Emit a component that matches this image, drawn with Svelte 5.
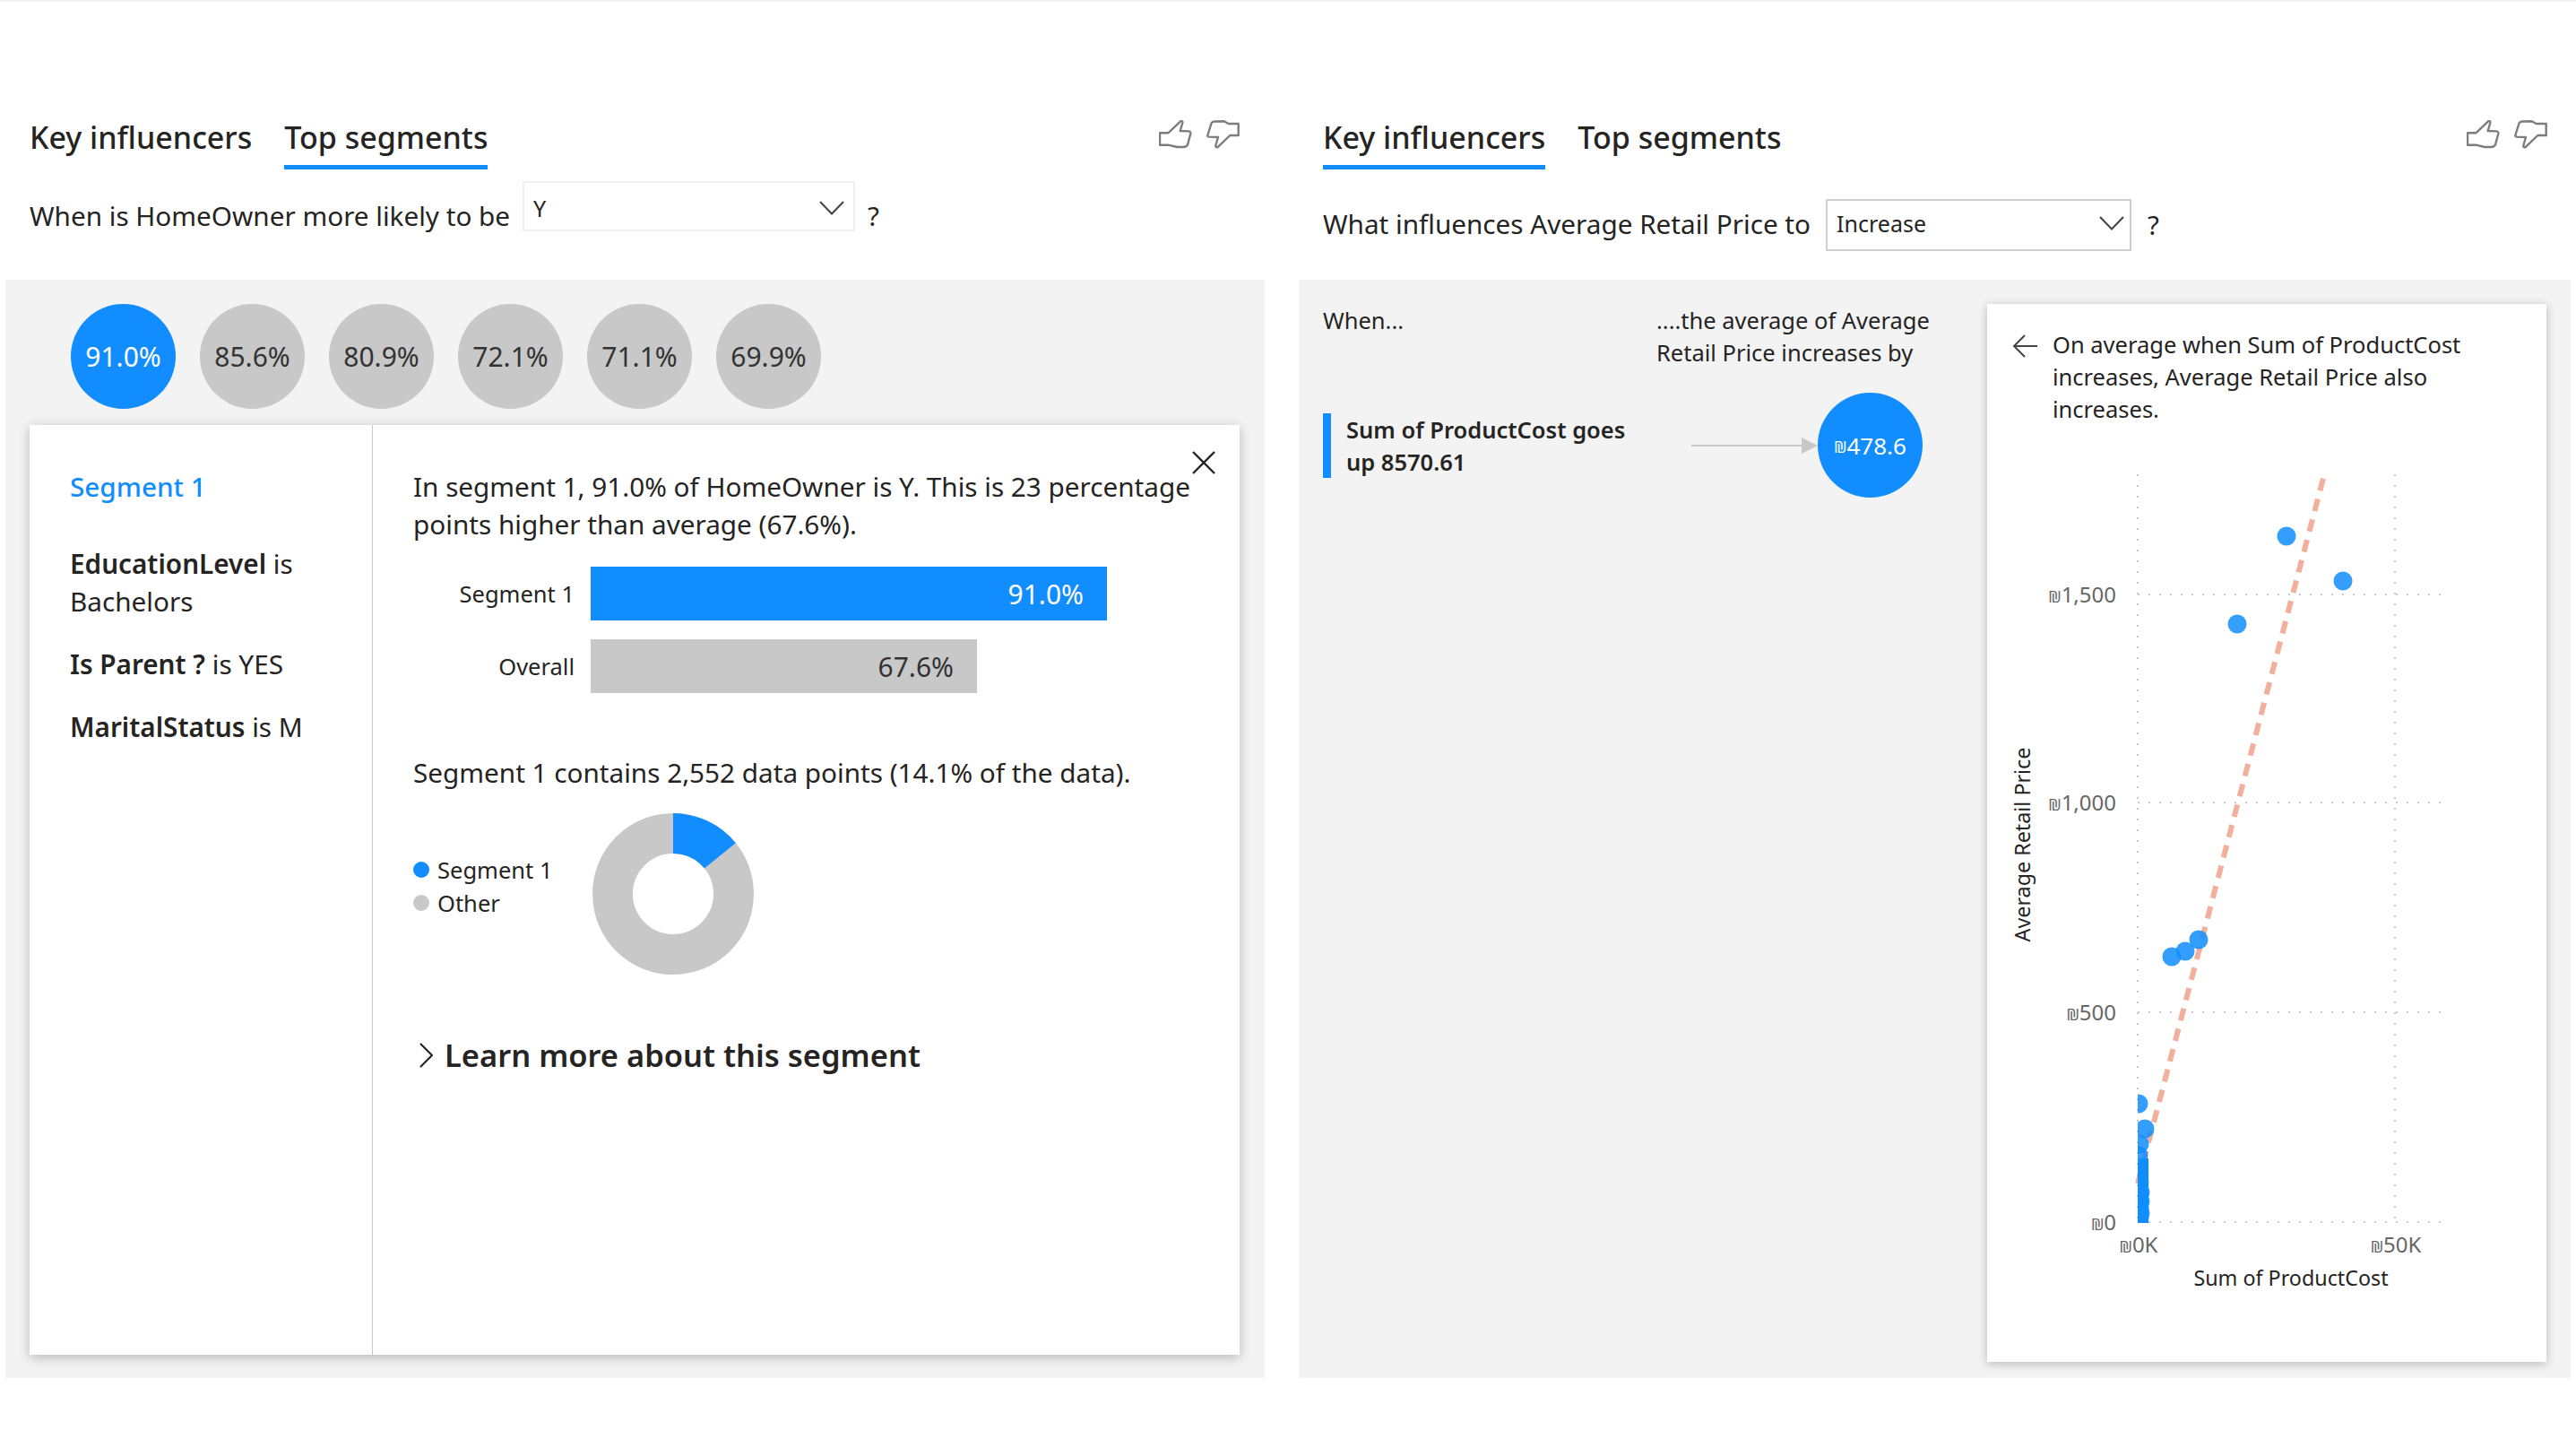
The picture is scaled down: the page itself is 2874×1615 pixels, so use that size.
<script>
  const circles = ["91.0%", "85.6%", "80.9%", "72.1%", "71.1%", "69.9%"];
  const conditions = [
    { name: "EducationLevel", text: " is Bachelors" },
    { name: "Is Parent ?", text: " is YES" },
    { name: "MaritalStatus", text: " is M" },
  ];
  const bars = [
    { label: "Segment 1", value: "91.0%", width: 576, color: "blue" },
    { label: "Overall", value: "67.6%", width: 431, color: "grey" },
  ];
  const yTicks = [
    { label: "1,500", y: 663 },
    { label: "1,000", y: 895 },
    { label: "500", y: 1129 },
    { label: "0", y: 1363 },
  ];
  const points = [
    [2551, 598], [2614, 648], [2496, 696], [2423, 1067], [2438, 1061], [2453, 1048],
    [2386, 1231], [2393, 1259], [2387, 1276], [2386, 1289], [2386, 1305], [2387, 1318], [2388, 1330],
    [2388, 1340], [2387, 1347], [2388, 1353], [2387, 1358],
  ];
</script>

{#snippet thumbs()}
  <div class="thumbs">
    <svg width="37" height="32" viewBox="0 0 37 32">
      <path d="M1 14.3H10.3L24.3 1.2Q26.8 0.8 26.3 3L23.7 12L33 12.4Q35.8 12.7 35.3 15L32 27.5Q31 29.8 27 30L20.3 30L10.3 27.7H1Z" />
    </svg>
    <svg width="37" height="32" viewBox="0 0 37 32">
      <path d="M1.3 17L5.5 3.5Q6.3 1.6 9 1.5L19.7 1.3L24.7 4H35.7V17H26.3L12.3 30.3Q10 30.5 10.3 28.5L13 19L3 18.6Q1 18.4 1.3 17Z" />
    </svg>
  </div>
{/snippet}

{#snippet chevron()}
  <svg class="chevron" width="28" height="16" viewBox="0 0 28 16">
    <path d="M1 1L14 14.5L27 1" />
  </svg>
{/snippet}

<div class="page">
  <section class="panel left">
    <div class="tabs">
      <div class="tab">Key influencers</div>
      <div class="tab active">Top segments</div>
      {@render thumbs()}
    </div>
    <div class="question first">
      <span>When is HomeOwner more likely to be</span>
      <div class="select light"><span>Y</span>{@render chevron()}</div>
      <span>?</span>
    </div>
    <div class="body segments">
      <div class="circles">
        {#each circles as c, i}
          <div class="circle" class:on={i === 0}>{c}</div>
        {/each}
      </div>
      <div class="card">
        <aside class="side">
          <div class="side-title">Segment 1</div>
          {#each conditions as c}
            <p class="condition"><b>{c.name}</b>{c.text}</p>
          {/each}
        </aside>
        <div class="detail">
          <svg class="close" width="26" height="26" viewBox="0 0 26 26">
            <path d="M1 1L25 25M25 1L1 25" />
          </svg>
          <p class="lead">In segment 1, 91.0% of HomeOwner is Y. This is 23 percentage points higher than average (67.6%).</p>
          <div class="bars">
            {#each bars as b}
              <div class="bar-row">
                <span class="bar-label">{b.label}</span>
                <div class="bar {b.color}" style="width: {b.width}px">{b.value}</div>
              </div>
            {/each}
          </div>
          <p class="contains">Segment 1 contains 2,552 data points (14.1% of the data).</p>
          <div class="share">
            <div class="legend">
              <div class="legend-item"><i class="dot blue"></i>Segment 1</div>
              <div class="legend-item"><i class="dot grey"></i>Other</div>
            </div>
            <svg width="180" height="180" viewBox="0 0 180 180">
              <circle cx="90" cy="90" r="67.5" fill="none" stroke="#c8c8c8" stroke-width="45" />
              <circle cx="90" cy="90" r="67.5" fill="none" stroke="#118dff" stroke-width="45"
                stroke-dasharray="59.8 424.1" transform="rotate(-90 90 90)" />
            </svg>
          </div>
          <div class="learn">
            <svg width="16" height="28" viewBox="0 0 16 28"><path d="M2 1L15 14L2 27" /></svg>
            <span>Learn more about this segment</span>
          </div>
        </div>
      </div>
    </div>
  </section>

  <section class="panel right">
    <div class="tabs">
      <div class="tab active">Key influencers</div>
      <div class="tab">Top segments</div>
      {@render thumbs()}
    </div>
    <div class="question second">
      <span class="question-text">What influences Average Retail Price to</span>
      <div class="select"><span>Increase</span>{@render chevron()}</div>
      <span class="question-mark">?</span>
    </div>
    <div class="body influencers">
      <div class="list">
        <div class="list-head">
          <span>When...</span>
          <span class="list-head-right">....the average of Average Retail Price increases by</span>
        </div>
        <div class="influencer">
          <div class="influencer-name">Sum of ProductCost goes up 8570.61</div>
          <div class="arrow"><i class="arrow-line"></i><i class="arrow-head"></i></div>
          <div class="circle on value"><small>₪</small>478.6</div>
        </div>
      </div>
      <div class="chart-card">
        <div class="chart-head">
          <svg width="28" height="26" viewBox="0 0 28 26"><path d="M14 1L2 13L14 25M2 13H28" /></svg>
          <p>On average when Sum of ProductCost increases, Average Retail Price also increases.</p>
        </div>
        <svg class="chart" width="624" height="1043" viewBox="2217 476 624 1043">
          {#each yTicks as t}
            <line class="grid" x1="2385" x2="2724" y1={t.y} y2={t.y} />
            <text class="tick" x="2361" y={t.y + 9} text-anchor="end"><tspan class="shekel">₪</tspan>{t.label}</text>
          {/each}
          <line class="grid" x1="2385" x2="2385" y1="529" y2="1363" />
          <line class="grid" x1="2672" x2="2672" y1="529" y2="1363" />
          <text class="tick" x="2386" y="1397" text-anchor="middle"><tspan class="shekel">₪</tspan>0K</text>
          <text class="tick" x="2673" y="1397" text-anchor="middle"><tspan class="shekel">₪</tspan>50K</text>
          <text class="axis" x="2556" y="1434" text-anchor="middle">Sum of ProductCost</text>
          <text class="axis" transform="translate(2265 942) rotate(-90)" text-anchor="middle">Average Retail Price</text>
          <line class="trend" x1="2385" y1="1320" x2="2594" y2="526" />
          <clipPath id="plot"><rect x="2385" y="500" width="360" height="864" /></clipPath>
          <g clip-path="url(#plot)">
            <rect x="2385" y="1292" width="12" height="72" fill="#118dff" />
            {#each points as p}
              <circle cx={p[0]} cy={p[1]} r="10.5" fill="#118dff" fill-opacity="0.85" />
            {/each}
          </g>
        </svg>
      </div>
    </div>
  </section>
</div>

<style>
  :global(body) {
    margin: 0;
    background: #fff;
  }

  .page {
    display: flex;
    gap: 38px;
    width: 2874px;
    height: 1615px;
    box-sizing: border-box;
    padding: 0 6px;
    border-top: 2px solid #f3f3f3;
    font-family: "Noto Sans", "DejaVu Sans", sans-serif;
    font-size: 29.7px;
    color: #252423;
  }

  .panel {
    display: flex;
    flex-direction: column;
    min-width: 0;
  }

  .panel.left {
    width: 1405px;
  }

  .panel.right {
    width: 1419px;
  }

  .tabs {
    display: flex;
    gap: 36px;
    padding: 127px 26px 0 27px;
  }

  .left .tabs {
    padding-right: 28px;
  }

  .tab {
    font-size: 34px;
    line-height: 48px;
    font-weight: 500;
    padding-bottom: 7px;
    border-bottom: 5px solid transparent;
  }

  .tab.active {
    border-bottom-color: #118dff;
  }

  .thumbs {
    display: flex;
    gap: 16px;
    margin: 5px 0 0 auto;
  }

  .thumbs path {
    fill: none;
    stroke: #7c7c7c;
    stroke-width: 2.4;
    stroke-linejoin: round;
  }

  .question {
    display: flex;
    gap: 14px;
    height: 123px;
    padding-left: 27px;
  }

  .question.first {
    align-items: flex-start;
  }

  .question.first > span {
    margin-top: 31px;
  }

  .question.second {
    align-items: center;
    gap: 17px;
  }

  .question-text {
    margin-bottom: 2px;
  }

  .question-mark {
    margin-left: 1px;
  }

  .select {
    display: flex;
    align-items: center;
    justify-content: space-between;
    box-sizing: border-box;
    width: 341px;
    height: 58px;
    padding: 0 6px 4px 10px;
    border: 2px solid #cfcfcf;
    font-size: 25px;
  }

  .select.light {
    width: 371px;
    height: 56px;
    margin-top: 13px;
    border-color: #efefef;
    padding: 3px 10px 0 10px;
  }

  .chevron path {
    fill: none;
    stroke: #444;
    stroke-width: 2;
  }

  .body {
    flex: none;
    height: 1225px;
    box-sizing: border-box;
    background: #f3f3f3;
  }

  .segments {
    display: flex;
    flex-direction: column;
    padding: 27px 28px 26px 27px;
  }

  .circles {
    display: flex;
    gap: 27px;
    padding-left: 46px;
    margin-bottom: 18px;
  }

  .circle {
    display: flex;
    align-items: center;
    justify-content: center;
    flex: none;
    width: 117px;
    height: 117px;
    border-radius: 50%;
    background: #c8c8c8;
    font-size: 30px;
    color: #333;
  }

  .circle.on {
    background: #118dff;
    color: #fff;
  }

  .card {
    display: flex;
    flex: 1;
    background: #fff;
    box-shadow: 0 3px 12px rgba(0, 0, 0, 0.25);
  }

  .side {
    box-sizing: border-box;
    width: 383px;
    padding: 48px 20px 0 45px;
    border-right: 1px solid #c8c8c8;
    line-height: 42px;
  }

  .side-title {
    color: #118dff;
    font-weight: 500;
    margin-bottom: 44px;
  }

  .condition {
    margin: 0 0 28px;
  }

  .condition b {
    font-weight: 600;
  }

  .detail {
    position: relative;
    flex: 1;
    padding: 48px 0 0 45px;
    line-height: 42px;
  }

  .close {
    position: absolute;
    top: 29px;
    right: 27px;
  }

  .close path {
    stroke: #252423;
    stroke-width: 2.4;
  }

  .lead {
    margin: 0;
    width: 880px;
  }

  .bars {
    display: flex;
    flex-direction: column;
    gap: 21px;
    margin-top: 26px;
  }

  .bar-row {
    display: flex;
    align-items: center;
    gap: 18px;
  }

  .bar-label {
    width: 180px;
    text-align: right;
    font-size: 25.5px;
  }

  .bar {
    box-sizing: border-box;
    height: 60px;
    padding-right: 26px;
    text-align: right;
    line-height: 62px;
    font-size: 30px;
  }

  .bar.blue {
    background: #118dff;
    color: #fff;
  }

  .bar.grey {
    background: #c8c8c8;
    color: #333;
  }

  .contains {
    margin: 68px 0 24px;
  }

  .share {
    display: flex;
    align-items: center;
  }

  .legend {
    width: 200px;
    padding-bottom: 17px;
    font-size: 25.5px;
    line-height: 37px;
  }

  .legend-item {
    display: flex;
    align-items: center;
    gap: 9px;
  }

  .dot {
    width: 18px;
    height: 18px;
    border-radius: 50%;
  }

  .dot.blue {
    background: #118dff;
  }

  .dot.grey {
    background: #c8c8c8;
  }

  .learn {
    display: flex;
    align-items: center;
    gap: 13px;
    margin: 65px 0 0 6px;
    font-size: 34.5px;
    line-height: 50px;
    font-weight: 600;
  }

  .learn path {
    fill: none;
    stroke: #252423;
    stroke-width: 2.2;
  }

  .influencers {
    display: flex;
    padding: 27px;
    padding-bottom: 18px;
    justify-content: space-between;
  }

  .list {
    width: 692px;
    font-size: 25.5px;
    line-height: 36px;
  }

  .list-head {
    display: flex;
    justify-content: space-between;
  }

  .list-head-right {
    width: 320px;
  }

  .influencer {
    display: flex;
    align-items: center;
    margin-top: 27px;
  }

  .influencer-name {
    box-sizing: border-box;
    flex: none;
    width: 411px;
    padding: 0 40px 0 17px;
    border-left: 9px solid #118dff;
    font-weight: 600;
  }

  .arrow {
    display: flex;
    align-items: center;
    flex: none;
    width: 141px;
  }

  .arrow-line {
    flex: 1;
    height: 2px;
    background: #c8c8c8;
  }

  .arrow-head {
    border-left: 18px solid #c8c8c8;
    border-top: 9px solid transparent;
    border-bottom: 9px solid transparent;
  }

  .value {
    font-size: 26px;
  }

  .value small {
    font-size: 18px;
    margin-top: 3px;
  }

  .chart-card {
    width: 624px;
    background: #fff;
    box-shadow: 0 2px 10px rgba(0, 0, 0, 0.25);
  }

  .chart-head {
    display: flex;
    gap: 17px;
    box-sizing: border-box;
    height: 137px;
    padding: 27px 20px 0 28px;
    line-height: 36px;
    font-size: 25.5px;
  }

  .chart-head p {
    margin: 0;
  }

  .chart-head svg {
    flex: none;
    margin-top: 7px;
  }

  .chart-head path {
    fill: none;
    stroke: #444;
    stroke-width: 2;
  }

  .chart {
    display: block;
  }

  .grid {
    stroke: #c8c8c8;
    stroke-width: 2;
    stroke-dasharray: 2 10;
  }

  .tick {
    font-size: 24px;
    fill: #666;
  }

  .shekel {
    font-size: 18px;
  }

  .axis {
    font-size: 23.3px;
    fill: #252423;
  }

  .trend {
    stroke: #f2b09c;
    stroke-width: 6;
    stroke-dasharray: 14 9.5;
  }
</style>
